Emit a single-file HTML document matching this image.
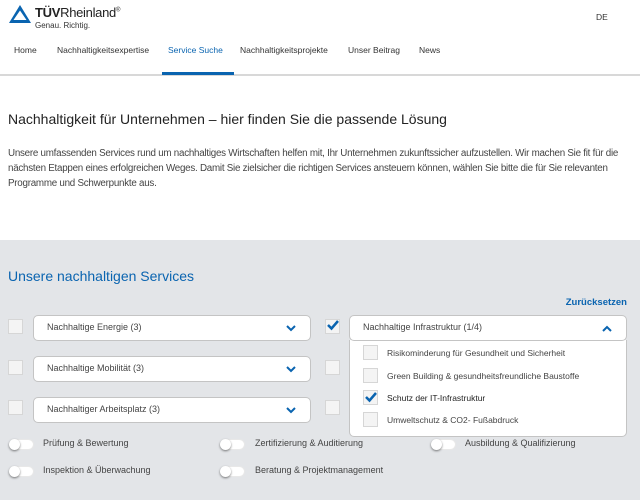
<!DOCTYPE html>
<html><head><meta charset="utf-8"><style>
*{margin:0;padding:0;box-sizing:border-box}
body{width:640px;height:500px;overflow:hidden;font-family:"Liberation Sans",sans-serif;color:#333;background:#fff;position:relative}
.a{position:absolute;white-space:nowrap}
.nav{font-size:8.5px;color:#333;top:45px}
.gray{position:absolute;left:0;top:240px;width:640px;height:260px;background:#e3e5e8}
.cb{position:absolute;width:15px;height:15px;background:#f4f4f4;border:1px solid #d6d6d6}
.sel{position:absolute;height:26px;background:#fff;border:1px solid #c4c4c4;border-radius:5px;font-size:9px;color:#444;padding:6px 0 0 13px}
.chev{position:absolute;right:14px;top:9px}
.it{position:absolute;font-size:8.5px;color:#444;left:387px}
.tg{position:absolute;width:25px;height:11px;border-radius:6px;background:#fff;border:1px solid #e8e8e8}
.tg::before{content:"";position:absolute;left:-1px;top:-1px;width:11px;height:11px;border-radius:50%;background:#fff;box-shadow:0 1px 2px rgba(0,0,0,.5)}
.tl{position:absolute;font-size:9px;color:#444}
</style></head><body>
<svg class="a" style="left:8px;top:4px" width="24" height="20" viewBox="0 0 24 20"><path d="M12 1 L23 19 H1 Z M12 6.5 L5.5 16 H18.5 Z" fill="#0a64b0" fill-rule="evenodd"/></svg>
<div class="a" style="left:35px;top:5px;font-size:13px;color:#222;letter-spacing:-0.3px"><b>TÜV</b>Rheinland<sup style="font-size:6px">®</sup></div>
<div class="a" style="left:35px;top:21px;font-size:8px;color:#333">Genau. Richtig.</div>
<div class="a" style="left:596px;top:12px;font-size:8.5px">DE</div>
<div class="a nav" style="left:14px">Home</div>
<div class="a nav" style="left:57px">Nachhaltigkeitsexpertise</div>
<div class="a nav" style="left:168px;color:#0a64b0">Service Suche</div>
<div class="a nav" style="left:240px">Nachhaltigkeitsprojekte</div>
<div class="a nav" style="left:348px">Unser Beitrag</div>
<div class="a nav" style="left:419px">News</div>
<div class="a" style="left:0;top:74px;width:640px;height:2px;background:#d8d8d8"></div>
<div class="a" style="left:162px;top:72px;width:72px;height:3px;background:#0a64b0"></div>
<div class="a" style="left:8px;top:111px;font-size:14px;color:#222">Nachhaltigkeit für Unternehmen – hier finden Sie die passende Lösung</div>
<div class="a" style="left:8px;top:146px;font-size:9.8px;line-height:15px;color:#444;letter-spacing:-0.25px">Unsere umfassenden Services rund um nachhaltiges Wirtschaften helfen mit, Ihr Unternehmen zukunftssicher aufzustellen. Wir machen Sie fit für die<br>nächsten Etappen eines erfolgreichen Weges. Damit Sie zielsicher die richtigen Services ansteuern können, wählen Sie bitte die für Sie relevanten<br>Programme und Schwerpunkte aus.</div>
<div class="gray"></div>
<div class="a" style="left:8px;top:268px;font-size:14px;color:#0a64b0">Unsere nachhaltigen Services</div>
<div class="a" style="right:13px;top:297px;font-size:9.5px;font-weight:bold;color:#0a64b0">Zurücksetzen</div>

<div class="cb" style="left:8px;top:319px"></div>
<div class="sel" style="left:33px;top:315px;width:278px">Nachhaltige Energie (3)<svg class="chev" width="10" height="7"><path d="M1 1 L5 5 L9 1" stroke="#0a64b0" stroke-width="2" fill="none"/></svg></div>
<div class="cb" style="left:8px;top:360px"></div>
<div class="sel" style="left:33px;top:356px;width:278px">Nachhaltige Mobilität (3)<svg class="chev" width="10" height="7"><path d="M1 1 L5 5 L9 1" stroke="#0a64b0" stroke-width="2" fill="none"/></svg></div>
<div class="cb" style="left:8px;top:400px"></div>
<div class="sel" style="left:33px;top:397px;width:278px">Nachhaltiger Arbeitsplatz (3)<svg class="chev" width="10" height="7"><path d="M1 1 L5 5 L9 1" stroke="#0a64b0" stroke-width="2" fill="none"/></svg></div>

<div class="cb" style="left:325px;top:319px"><svg width="14" height="14" style="position:absolute;left:0;top:-2px"><path d="M2 7 L5.5 10.5 L12 3" stroke="#0a64b0" stroke-width="2.5" fill="none"/></svg></div>
<div class="cb" style="left:325px;top:360px"></div>
<div class="cb" style="left:325px;top:400px"></div>
<div class="a" style="left:349px;top:340px;width:278px;height:97px;background:#fff;border:1px solid #c4c4c4;border-top:none;border-radius:0 0 5px 5px"></div>
<div class="sel" style="left:349px;top:315px;width:278px">Nachhaltige Infrastruktur (1/4)<svg class="chev" width="10" height="7"><path d="M1 6 L5 2 L9 6" stroke="#0a64b0" stroke-width="2" fill="none"/></svg></div>
<div class="cb" style="left:363px;top:345px"></div><div class="it" style="top:348px">Risikominderung für Gesundheit und Sicherheit</div>
<div class="cb" style="left:363px;top:368px"></div><div class="it" style="top:371px">Green Building &amp; gesundheitsfreundliche Baustoffe</div>
<div class="cb" style="left:363px;top:390px"><svg width="14" height="14" style="position:absolute;left:0;top:-1px"><path d="M2 7 L5.5 10.5 L12 3" stroke="#0a64b0" stroke-width="2.5" fill="none"/></svg></div><div class="it" style="top:393px;color:#222">Schutz der IT-Infrastruktur</div>
<div class="cb" style="left:363px;top:412px"></div><div class="it" style="top:415px">Umweltschutz &amp; CO2- Fußabdruck</div>

<div class="tg" style="left:9px;top:439px"></div><div class="tl" style="left:43px;top:438px">Prüfung &amp; Bewertung</div>
<div class="tg" style="left:220px;top:439px"></div><div class="tl" style="left:255px;top:438px">Zertifizierung &amp; Auditierung</div>
<div class="tg" style="left:431px;top:439px"></div><div class="tl" style="left:465px;top:438px">Ausbildung &amp; Qualifizierung</div>
<div class="tg" style="left:9px;top:466px"></div><div class="tl" style="left:43px;top:465px">Inspektion &amp; Überwachung</div>
<div class="tg" style="left:220px;top:466px"></div><div class="tl" style="left:255px;top:465px">Beratung &amp; Projektmanagement</div>
</body></html>
